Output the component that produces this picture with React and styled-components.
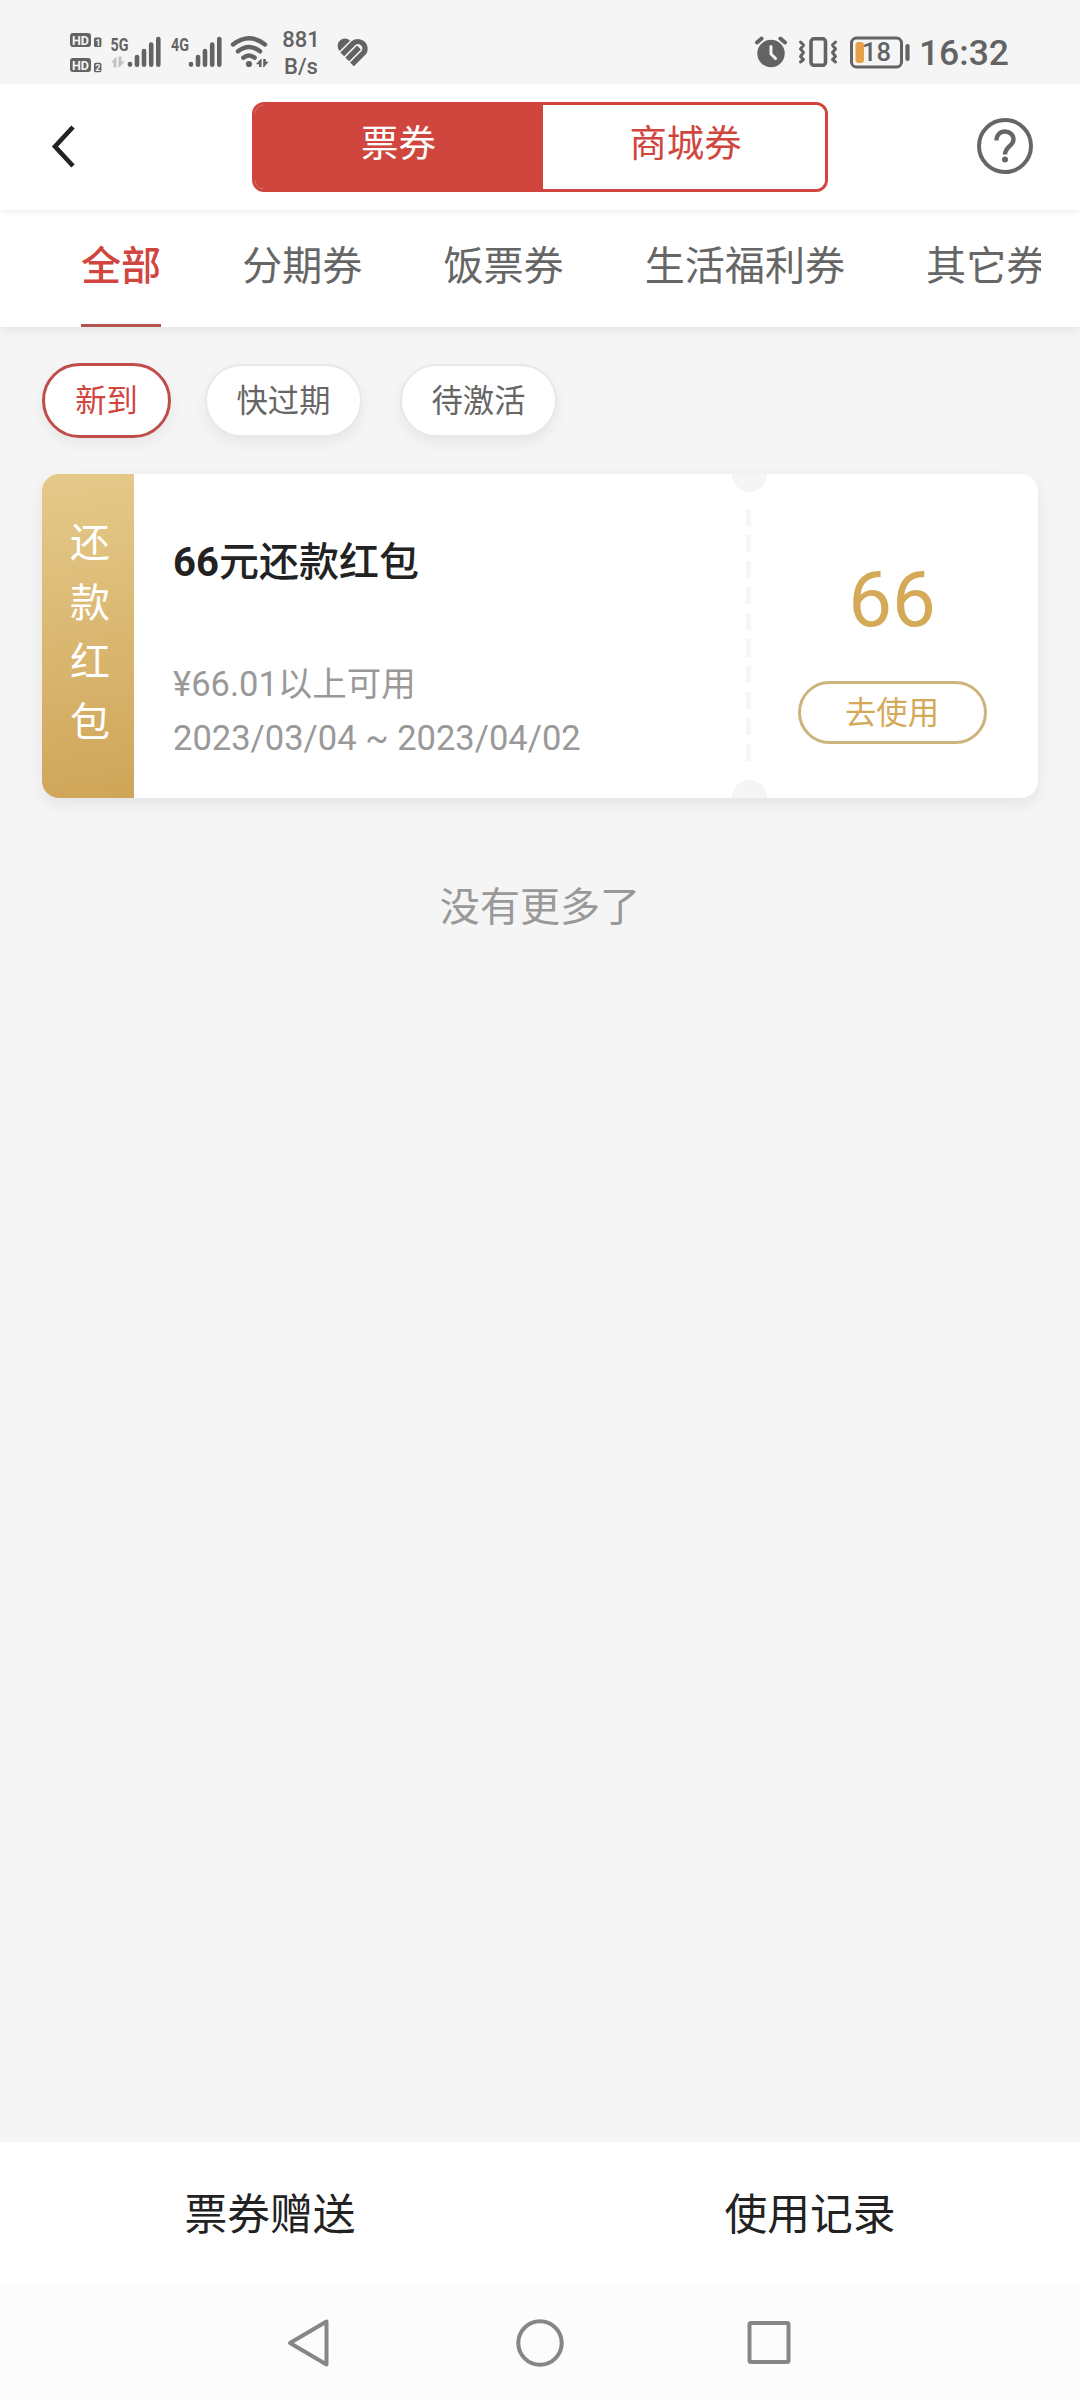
import React from 'react';
import styled, { createGlobalStyle } from 'styled-components';

const red = '#d0463f';
const gold = '#d4a957';
const grey = '#666666';
const page_bg = '#f5f5f5';

const GlobalStyle = createGlobalStyle`
    * {
        box-sizing:border-box;
    }
    body {
        margin:0;
        background-color:${page_bg};
        font-family:Roboto, "Noto Sans CJK SC", sans-serif;
        color:#222;
    }
    button {
        font-family:inherit;
        padding:0;
        margin:0;
    }
`
const Screen = styled.div`
    width:1080px;
    height:2400px;
    display:flex;
    flex-direction:column;
    overflow:hidden;
    background-color:${page_bg};
`
const StatusBar = styled.div`
    height:84px;
    flex:none;
    display:flex;
    justify-content:space-between;
    padding:0 71px 0 69px;
    color:#636363;
`
const StatusGroup = styled.div`
    display:flex;
    height:84px;

    > svg {
        display:block;
        flex:none;
    }
`
const Speed = styled.div`
    width:38px;
    margin:26px 17px 0 13px;
    font-size:22px;
    line-height:27px;
    font-weight:500;
    text-align:center;
`
const Clock = styled.span`
    font-size:35.5px;
    font-weight:500;
    line-height:40px;
    margin:33px 0 0 8px;
    white-space:nowrap;
`
const Header = styled.header`
    height:126px;
    flex:none;
    display:flex;
    align-items:center;
    justify-content:space-between;
    padding:0 46px 2px 51px;
    background-color:#fff;
    box-shadow:0 2px 6px rgba(0,0,0,.07);
    z-index:2;
`
const Segment = styled.div`
    display:flex;
    width:576px;
    height:90px;
    margin-left:28px;
    margin-top:2px;
    border:3px solid ${red};
    border-radius:12px;
    overflow:hidden;
`
const SegmentItem = styled.button`
    width:${({$active}) => $active ? '288px' : '282px'};
    height:84px;
    padding:${({$active}) => $active ? '0 1px 7px 0' : '0 0 7px 3px'};
    border:none;
    font-size:37.4px;
    line-height:50px;
    color:${({$active}) => $active ? '#fff' : red};
    background-color:${({$active}) => $active ? red : '#fff'};
`
const Tabs = styled.nav`
    height:117px;
    flex:none;
    padding:0 39px 0 81px;
    background-color:#fff;
    box-shadow:0 3px 10px rgba(0,0,0,.07);
    z-index:1;
`
const TabScroll = styled.div`
    display:flex;
    gap:81px;
    height:117px;
    overflow:hidden;
`
const Tab = styled.span`
    flex:none;
    height:117px;
    padding-top:27px;
    font-size:40.1px;
    line-height:60px;
    white-space:nowrap;
    font-weight:${({$active}) => $active ? 500 : 400};
    color:${({$active}) => $active ? red : grey};
    border-bottom:3px solid ${({$active}) => $active ? '#b4544f' : 'transparent'};
`
const Content = styled.main`
    flex:1;
    padding:36px 42px 0;
`
const Chips = styled.div`
    display:flex;
    align-items:center;
    height:75px;
`
const Chip = styled.button`
    width:${({$active}) => $active ? '129px' : '157px'};
    height:${({$active}) => $active ? '75px' : '73px'};
    padding-top:2px;
    margin-right:${({$active}) => $active ? '34px' : '38px'};
    border:${({$active}) => $active ? `3px solid #bf4d49` : '2px solid #e8e8e8'};
    border-radius:38px;
    background-color:#fff;
    box-shadow:0 6px 14px rgba(0,0,0,.06);
    font-size:31.3px;
    line-height:46px;
    color:${({$active}) => $active ? red : grey};
`
const Coupon = styled.div`
    display:flex;
    position:relative;
    height:324px;
    margin-top:36px;
    border-radius:17px;
    background-color:#fff;
    box-shadow:0 6px 16px rgba(0,0,0,.07);
`
const CouponType = styled.div`
    width:92px;
    padding:40px 20px 0 28px;
    border-radius:17px 0 0 17px;
    background:linear-gradient(170deg, #e5ca8b, #cfa558);
    color:#fff;
    font-size:40px;
    line-height:59.6px;
    word-break:break-all;
`
const CouponInfo = styled.div`
    width:612px;
    padding:59px 0 0 39px;
    color:#999;
    font-size:34.5px;
    line-height:54px;

    > h3 {
        margin:0 0 64px;
        font-size:40px;
        line-height:60px;
        font-weight:500;
        color:#222;
    }

    > p {
        margin:0;
    }
`
const Digits = styled.b`
    font-weight:700;
`
const Perforation = styled.div`
    width:5px;
    height:252px;
    margin-top:35px;
    background:repeating-linear-gradient(#f6f6f6 0 17px, #fff 17px 26.1px);
`
const Notch = styled.div`
    position:absolute;
    left:690px;
    width:35px;
    height:18px;
    background-color:${page_bg};
    ${({$bottom}) => $bottom ? 'bottom:0; border-radius:18px 18px 0 0;' : 'top:0; border-radius:0 0 18px 18px;'}
`
const CouponAction = styled.div`
    flex:1;
    display:flex;
    flex-direction:column;
    align-items:center;
    padding:80px 5px 0 0;
`
const Amount = styled.div`
    font-size:78px;
    line-height:92px;
    color:${gold};
`
const UseButton = styled.button`
    width:189px;
    height:63px;
    margin-top:35px;
    padding-top:2px;
    border:3px solid #cdb47c;
    border-radius:32px;
    background-color:#fff;
    color:${gold};
    font-size:31.3px;
    line-height:46px;
`
const NoMore = styled.p`
    margin:80px 0 0;
    text-align:center;
    font-size:40.1px;
    line-height:60px;
    color:#999;
`
const Footer = styled.footer`
    flex:none;
    display:grid;
    grid-template-columns:1fr 1fr;
    height:144px;
    background-color:#fff;
`
const FooterLink = styled.span`
    text-align:center;
    font-size:42.75px;
    line-height:147px;
`
const NavBar = styled.div`
    flex:none;
    height:114px;
    display:flex;
    justify-content:space-between;
    padding:29px 286px 0 286px;
    background-color:#fcfcfc;
`

const SignalBars = ({x}) => (
    <g stroke="currentColor" strokeWidth="4.6" strokeLinecap="round">
        <path d={`M${x} 64v.6M${x + 7} 57v7.8M${x + 14} 51v13.8M${x + 21.2} 44.5v20.3M${x + 28.3} 39v25.8`} />
    </g>
)

const HdIcon = () => (
    <svg width="34" height="84" viewBox="69 0 34 84" fontFamily="Roboto" fontWeight="700" fill="currentColor">
        <rect x="70" y="33" width="21" height="14" rx="3" />
        <text x="72" y="44.6" fontSize="13" textLength="17" lengthAdjust="spacingAndGlyphs" fill={page_bg}>HD</text>
        <rect x="94" y="37.5" width="7.4" height="9.5" rx="1.5" />
        <text x="95.4" y="45.6" fontSize="9" fill={page_bg}>1</text>
        <rect x="70" y="58" width="21" height="14" rx="3" />
        <text x="72" y="69.6" fontSize="13" textLength="17" lengthAdjust="spacingAndGlyphs" fill={page_bg}>HD</text>
        <rect x="94" y="62.7" width="7.4" height="9.5" rx="1.5" />
        <text x="95.2" y="70.7" fontSize="9" fill={page_bg}>2</text>
    </svg>
)

const SignalIcons = () => (
    <svg width="120" height="84" viewBox="103 0 120 84" fontFamily="Roboto" fontWeight="700" fontSize="18.5" fill="currentColor">
        <text x="110.5" y="50.7" textLength="18" lengthAdjust="spacingAndGlyphs">5G</text>
        <path d="M111 62.500l5.500-6v11h-3v-5zM118.500 56.500h3v5h3.200l-5.700 6h-.5z" fill="#c2c2c2" />
        <SignalBars x={130} />
        <text x="171" y="50.7" textLength="18" lengthAdjust="spacingAndGlyphs">4G</text>
        <SignalBars x={191} />
    </svg>
)

const WifiIcon = () => (
    <svg width="46" height="84" viewBox="223 0 46 84" fill="none" stroke="currentColor" strokeWidth="4.4" strokeLinecap="round">
        <path d="M233 44.5q16-12.5 32 0M238 51.3q11-8.6 22 0M243.3 57.700q5.700-4.400 11.400 0" />
        <circle cx="249" cy="64" r="3.1" fill="currentColor" stroke="none" />
        <path d="M255.800 64.200l5-5.200h.8v8h-2.600v-2.800zM263.200 59h2.600v2.800h2.800l-4.600 5.400h-.8z" fill="currentColor" stroke="none" />
    </svg>
)

const HeartIcon = () => (
    <svg width="32" height="84" viewBox="336 0 32 84" fill="none" stroke="currentColor" strokeWidth="5.4">
        <path d="M338.700 51a7.300 7.300 0 0 1 0-10.300a7.300 7.300 0 0 1 10.300 0z" fill="currentColor" stroke="none" />
        <path d="M341.300 54.300L352.500 43.100a7.100 7.100 0 0 1 10.500 9.200L351 64.300" />
        <path d="M346.200 59.300L358 47.500" />
    </svg>
)

const AlarmIcon = () => (
    <svg width="34" height="84" viewBox="754 0 34 84" fill="none" stroke="currentColor" strokeWidth="4" strokeLinecap="round">
        <circle cx="771" cy="53.5" r="13.7" fill="currentColor" stroke="none" />
        <path d="M757 42.5l4.600-4M785 42.500l-4.600-4" />
        <path d="M771 46.500v7.500l4.500 4.500" stroke={page_bg} strokeWidth="3" />
    </svg>
)

const VibrateIcon = () => (
    <svg width="42" height="84" viewBox="797 0 42 84" fill="none" stroke="currentColor" strokeWidth="3.6" strokeLinecap="round" strokeLinejoin="round">
        <rect x="811" y="38.8" width="14.5" height="26.5" rx="3" />
        <path d="M800.500 42l3 3-3 4 3 3.500-3 4 3 3-3 2.500M835.500 42l-3 3 3 4-3 3.500 3 4-3 3 3 2.500" strokeWidth="3" />
    </svg>
)

const BatteryIcon = () => (
    <svg width="62" height="84" viewBox="849 0 62 84" fill="none" stroke="currentColor" strokeWidth="3">
        <rect x="851.5" y="38" width="50" height="29" rx="5" />
        <rect x="855.5" y="42" width="8.5" height="21" rx="3" fill="#e9a04a" stroke="none" />
        <path d="M907.500 46v13" strokeWidth="4.2" strokeLinecap="round" />
        <text x="862" y="61" fontSize="26" fontWeight="500" fontFamily="Roboto" fill="currentColor" stroke="none" textLength="29" lengthAdjust="spacingAndGlyphs">18</text>
    </svg>
)

const BackIcon = () => (
    <svg width="25" height="44" viewBox="0 0 25 44" fill="none" stroke="#222" strokeWidth="4.6">
        <path d="M22 3L4 22.500 22 42" />
    </svg>
)

const HelpIcon = () => (
    <svg width="58" height="58" viewBox="0 0 58 58" fill="none" stroke={grey} strokeWidth="4">
        <circle cx="29" cy="29" r="26" />
        <path d="M20.500 23.500c0-5.500 3.500-9 8.500-9s8.500 3.500 8.500 8c0 6.500-8.500 7-8.500 15" strokeWidth="4.4" />
        <circle cx="29" cy="42.5" r="3" fill={grey} stroke="none" />
    </svg>
)

const tabs = ['全部', '分期券', '饭票券', '生活福利券', '其它券'];
const chips = ['新到', '快过期', '待激活'];

const App = () => {
    return (
        <>
            <GlobalStyle />
            <Screen>
                <StatusBar>
                    <StatusGroup>
                        <HdIcon />
                        <SignalIcons />
                        <WifiIcon />
                        <Speed>881<br />B/s</Speed>
                        <HeartIcon />
                    </StatusGroup>
                    <StatusGroup>
                        <AlarmIcon />
                        <svg width="9" height="84" />
                        <VibrateIcon />
                        <svg width="10" height="84" />
                        <BatteryIcon />
                        <Clock>16:32</Clock>
                    </StatusGroup>
                </StatusBar>
                <Header>
                    <BackIcon />
                    <Segment>
                        <SegmentItem $active>票券</SegmentItem>
                        <SegmentItem>商城券</SegmentItem>
                    </Segment>
                    <HelpIcon />
                </Header>
                <Tabs>
                    <TabScroll>
                        {tabs.map((tab, i) => <Tab key={tab} $active={i === 0}>{tab}</Tab>)}
                    </TabScroll>
                </Tabs>
                <Content>
                    <Chips>
                        {chips.map((chip, i) => <Chip key={chip} $active={i === 0}>{chip}</Chip>)}
                    </Chips>
                    <Coupon>
                        <CouponType>还款红包</CouponType>
                        <CouponInfo>
                            <h3><Digits>66</Digits>元还款红包</h3>
                            <p>¥66.01以上可用</p>
                            <p>2023/03/04 ~ 2023/04/02</p>
                        </CouponInfo>
                        <Perforation />
                        <Notch />
                        <Notch $bottom />
                        <CouponAction>
                            <Amount>66</Amount>
                            <UseButton>去使用</UseButton>
                        </CouponAction>
                    </Coupon>
                    <NoMore>没有更多了</NoMore>
                </Content>
                <Footer>
                    <FooterLink>票券赠送</FooterLink>
                    <FooterLink>使用记录</FooterLink>
                </Footer>
                <NavBar>
                    <svg width="48" height="56" viewBox="286 2315 48 56" fill="none" stroke="#868686" strokeWidth="4" strokeLinejoin="round">
                        <path d="M290 2343l36.500-21.500v43z" />
                    </svg>
                    <svg width="52" height="56" viewBox="514 2315 52 56" fill="none" stroke="#868686" strokeWidth="4">
                        <circle cx="540" cy="2343" r="21.7" />
                    </svg>
                    <svg width="48" height="56" viewBox="746 2315 48 56" fill="none" stroke="#868686" strokeWidth="4">
                        <rect x="749.5" y="2323" width="39" height="39" rx="1.5" />
                    </svg>
                </NavBar>
            </Screen>
        </>
    );
}

export default App;
